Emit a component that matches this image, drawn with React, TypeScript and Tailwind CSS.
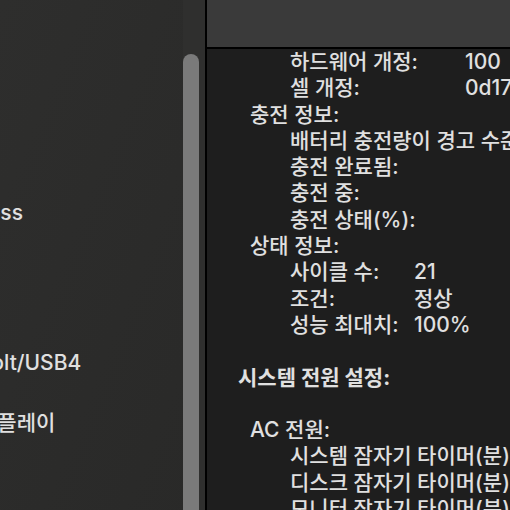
import React from 'react';

const sidebarItems = [
  'ATA',
  'Apple Pay',
  'Bluetooth',
  'Ethernet',
  'NVMExpress',
  'PCI',
  'SAS',
  'SATA',
  'SPI',
  'Thunderbolt/USB4',
  'USB',
  '그래픽/디스플레이',
  '메모리',
  '오디오',
];

type Row = { label: string; value?: string };

const Group: React.FC<{ rows: Row[]; labelWidth: string }> = ({ rows, labelWidth }) => (
  <div className={`grid pl-[83px] ${labelWidth}`}>
    {rows.map((r, i) => (
      <React.Fragment key={i}>
        <span>{r.label}</span>
        <span>{r.value}</span>
      </React.Fragment>
    ))}
  </div>
);

export default function App() {
  return (
    <div
      className="flex h-[510px] w-[510px] overflow-hidden bg-[#1e1e1e] text-[21px] font-medium text-[#e0e0e0]"
      style={{ fontFamily: 'Inter, "Noto Sans CJK KR", sans-serif' }}
    >
      {/* 사이드바 */}
      <div className="relative flex h-full w-[205px] shrink-0 overflow-hidden bg-gradient-to-br from-[#2e2e2d] to-[#292928]">
        <div className="flex-1 overflow-hidden">
          <ul className="ml-[-107px] pt-[78px] whitespace-nowrap leading-[30px]">
            {sidebarItems.map((item) => (
              <li key={item}>{item}</li>
            ))}
          </ul>
        </div>
        {/* 스크롤바 */}
        <div className="flex w-[22px] shrink-0 justify-center bg-[#2f2f2e] pt-[54px] pr-[6px]">
          <div className="w-[16px] flex-1 rounded-t-full bg-[#7a7a7a]" />
        </div>
      </div>

      <div className="w-[2px] shrink-0 bg-black" />

      {/* 상세 정보 */}
      <div className="flex min-w-0 flex-1 flex-col">
        <div className="h-[49px] shrink-0 border-b-2 border-black bg-[#3a3a3a]" />
        <div className="flex-1 overflow-hidden whitespace-nowrap leading-[26.3px]">
          <Group
            labelWidth="grid-cols-[175px_auto]"
            rows={[
              { label: '하드웨어 개정:', value: '100' },
              { label: '셀 개정:', value: '0d1737' },
            ]}
          />
          <div className="pl-[43px]">충전 정보:</div>
          <div className="pl-[83px]">
            <div>배터리 충전량이 경고 수준 이하로 떨어짐:</div>
            <div>충전 완료됨:</div>
            <div>충전 중:</div>
            <div>충전 상태(%):</div>
          </div>
          <div className="pl-[43px]">상태 정보:</div>
          <Group
            labelWidth="grid-cols-[124px_auto]"
            rows={[
              { label: '사이클 수:', value: '21' },
              { label: '조건:', value: '정상' },
              { label: '성능 최대치:', value: '100%' },
            ]}
          />
          <div className="h-[26.3px]" />
          <div className="pl-[31px] font-bold">시스템 전원 설정:</div>
          <div className="h-[26.3px]" />
          <div className="pl-[43px]">AC 전원:</div>
          <div className="pl-[83px]">
            <div>시스템 잠자기 타이머(분):</div>
            <div>디스크 잠자기 타이머(분):</div>
            <div>모니터 잠자기 타이머(분):</div>
          </div>
        </div>
      </div>
    </div>
  );
}
